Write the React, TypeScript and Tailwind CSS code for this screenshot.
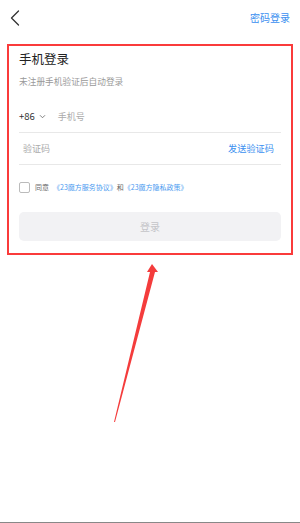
import React from 'react';

const App: React.FC = () => {
  return (
    <div className="w-[300px] h-[523px] bg-white flex flex-col font-['Noto_Sans_CJK_SC','Noto_Sans',sans-serif] overflow-hidden">
      <div className="h-[34px] flex items-center justify-between pl-[10px] pr-[10px] pt-[2px]">
        <svg width="10" height="16" viewBox="0 0 10 16" fill="none">
          <path d="M8.5 1 L1.5 8 L8.5 15" stroke="#333" strokeWidth="1.3" strokeLinecap="round" strokeLinejoin="round" />
        </svg>
        <span className="text-[10px] text-[#3a8ff0] leading-none">密码登录</span>
      </div>

      <div className="mt-[10px] mx-[7px] w-[286px] border-2 border-[#fa3b3b] pl-[10px] pr-[10px] pt-[2px] pb-[12px]">
        <div className="text-[12.5px] leading-[22px] text-[#222]">手机登录</div>
        <div className="mt-[5px] text-[8.7px] leading-[14px] text-[#999]">未注册手机验证后自动登录</div>

        <div className="mt-[12px] h-[32px] flex items-center border-b border-[#e8e8e8]">
          <span className="text-[9.5px] text-[#333]">+86</span>
          <svg className="ml-[4px]" width="7" height="5" viewBox="0 0 8 6" fill="none">
            <path d="M1 1.5 L4 4.5 L7 1.5" stroke="#666" strokeWidth="1" />
          </svg>
          <span className="ml-[12px] text-[9px] text-[#aaa]">手机号</span>
        </div>

        <div className="h-[32px] flex items-center justify-between border-b border-[#e8e8e8] pl-[4px] pr-[7px]">
          <span className="text-[9px] text-[#aaa]">验证码</span>
          <span className="text-[9.2px] text-[#3a8ff0]">发送验证码</span>
        </div>

        <div className="mt-[17px] flex items-center">
          <div className="w-[11px] h-[11px] rounded-[2px] border border-[#bbb]" />
          <span className="ml-[5px] text-[7px] text-[#666]">同意</span>
          <span className="ml-[4px] text-[7px] text-[#4a9af0]">《23魔方服务协议》</span>
          <span className="text-[7px] text-[#666]">和</span>
          <span className="text-[7px] text-[#4a9af0]">《23魔方隐私政策》</span>
        </div>

        <div className="mt-[19px] h-[29px] rounded-[5px] bg-[#f2f2f4] flex items-center justify-center">
          <span className="text-[10px] text-[#c4c4c8]">登录</span>
        </div>
      </div>

      <svg className="mt-[8px]" width="300" height="160" viewBox="0 0 300 160">
        <polygon points="152,1 158,9 155,9 115,159 114,159 150,9 147,9" fill="#f43c3c" />
      </svg>

      <div className="flex-1" />
      <div className="h-[1px] bg-[#888]" />
    </div>
  );
};

export default App;
